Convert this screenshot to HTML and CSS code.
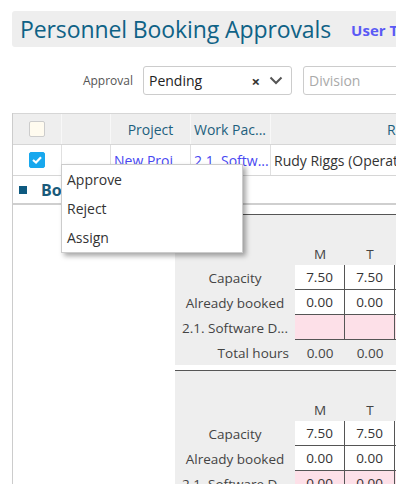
FILE: index.html
```html
<!DOCTYPE html>
<html>
<head>
<meta charset="utf-8">
<link rel="stylesheet" href="styles.css">
</head>
<body>
<div class="page">
  <div class="header">
    <h1 class="title">Personnel Booking Approvals</h1>
    <a class="user-link">User Timesheets</a>
  </div>

  <div class="filters">
    <span class="filter-label">Approval</span>
    <div class="select">
      <span class="select-value">Pending</span>
      <span class="select-clear">×</span>
      <svg class="chevron" width="14" height="9" viewBox="0 0 14 9"><path d="M1.5 1.5 L7 7 L12.5 1.5" fill="none" stroke="#555" stroke-width="2"/></svg>
    </div>
    <div class="select select-wide">
      <span class="select-placeholder">Division</span>
    </div>
  </div>

  <div class="grid">
    <div class="row head">
      <div class="cell c-check"><span class="checkbox"></span></div>
      <div class="cell c-blank"></div>
      <div class="cell c-project center">Project</div>
      <div class="cell c-wp">Work Pac...</div>
      <div class="cell c-req center">Requester</div>
    </div>
    <div class="row data">
      <div class="cell c-check"><span class="checkbox checked"><svg width="10" height="8" viewBox="0 0 10 8"><path d="M1 4 L4 6.5 L9 1.2" fill="none" stroke="#fff" stroke-width="2.2"/></svg></span></div>
      <div class="cell c-blank"></div>
      <div class="cell c-project"><a class="link">New Proj</a></div>
      <div class="cell c-wp"><a class="link">2.1. Softw...</a></div>
      <div class="cell c-req">Rudy Riggs (Operations)</div>
    </div>
    <div class="group">
      <span class="group-icon"></span>
      <span class="group-title">Booking details</span>
    </div>
    <div class="details">
      <div class="panel">
        <table class="hours">
          <tr class="days"><td class="lbl"></td><td class="day">M</td><td class="day">T</td><td class="day">W</td></tr>
          <tr><td class="lbl">Capacity</td><td class="v">7.50</td><td class="v">7.50</td><td class="v">7.50</td></tr>
          <tr><td class="lbl">Already booked</td><td class="v">0.00</td><td class="v">0.00</td><td class="v">0.00</td></tr>
          <tr><td class="lbl">2.1. Software D...</td><td class="v pink"></td><td class="v pink"></td><td class="v pink"></td></tr>
          <tr class="total"><td class="lbl right">Total hours</td><td class="t">0.00</td><td class="t">0.00</td><td class="t">0.00</td></tr>
        </table>
      </div>
      <div class="panel">
        <table class="hours">
          <tr class="days"><td class="lbl"></td><td class="day">M</td><td class="day">T</td><td class="day">W</td></tr>
          <tr><td class="lbl">Capacity</td><td class="v">7.50</td><td class="v">7.50</td><td class="v">7.50</td></tr>
          <tr><td class="lbl">Already booked</td><td class="v">0.00</td><td class="v">0.00</td><td class="v">0.00</td></tr>
          <tr><td class="lbl">2.1. Software D...</td><td class="v pink">0.00</td><td class="v pink">0.00</td><td class="v pink">0.00</td></tr>
          <tr class="total"><td class="lbl right">Total hours</td><td class="t">0.00</td><td class="t">0.00</td><td class="t">0.00</td></tr>
        </table>
      </div>
    </div>
  </div>

  <div class="menu">
    <div class="menu-item">Approve</div>
    <div class="menu-item">Reject</div>
    <div class="menu-item">Assign</div>
  </div>
</div>
</body>
</html>
```

FILE: styles.css
```css
html, body {
  margin: 0;
  padding: 0;
  overflow: hidden;
  background: #fff;
}
body {
  font-family: "Open Sans", "Noto Sans", sans-serif;
  color: #333;
  width: 396px;
  height: 484px;
}
.page {
  position: relative;
  padding: 11px 0 0 12px;
  width: 800px;
}
.header {
  display: flex;
  align-items: center;
  height: 36px;
  background: #eeeeee;
  border-radius: 3px 0 0 3px;
  padding-left: 8px;
  white-space: nowrap;
}
.title {
  margin: 0;
  font-weight: normal;
  font-size: 23px;
  color: #0f6286;
  letter-spacing: -0.1px;
}
.user-link {
  margin-left: 20px;
  font-size: 15px;
  font-weight: bold;
  color: #5a5af5;
  margin-top: 2px;
}
.filters {
  display: flex;
  align-items: center;
  margin-top: 19px;
  padding-left: 62px;
  height: 29px;
}
.filter-label {
  font-size: 12px;
  color: #555;
  width: 59px;
  text-align: right;
  margin-right: 10px;
}
.select {
  box-sizing: border-box;
  display: flex;
  align-items: center;
  width: 149px;
  height: 29px;
  border: 1px solid #ccc;
  border-radius: 3px;
  padding: 0 5px 0 5px;
}
.select-value {
  flex: 1;
  font-size: 14px;
  color: #222;
}
.select-clear {
  font-size: 15px;
  font-weight: bold;
  color: #333;
  margin-right: 9px;
}
.chevron {
  margin-right: 3px;
}
.select-wide {
  margin-left: 11px;
  width: 200px;
}
.select-placeholder {
  font-size: 14px;
  color: #aaa;
}
.grid {
  margin-top: 18px;
  border-left: 1px solid #ccc;
  width: 760px;
}
.row {
  display: flex;
  border-top: 1px solid #d6d6d6;
}
.row.head {
  background: #eeeeee;
  height: 30px;
}
.row.data {
  height: 30px;
}
.cell {
  box-sizing: border-box;
  display: flex;
  align-items: center;
  font-size: 14px;
  white-space: nowrap;
  overflow: hidden;
  padding: 0 3px;
}
.head .cell {
  color: #1d5f7d;
  border-right: 1px solid #f8f8f8;
}
.data .cell {
  border-right: 1px solid #e0e0e0;
}
.center {
  justify-content: center;
}
.c-check { width: 49px; justify-content: center; }
.c-blank { width: 49px; }
.c-project { width: 80px; }
.c-wp { width: 80px; }
.c-req { width: 300px; }
.checkbox {
  box-sizing: border-box;
  display: inline-flex;
  align-items: center;
  justify-content: center;
  width: 16px;
  height: 16px;
  border: 1px solid #ccc;
  border-radius: 2px;
  background: #fffbef;
}
.checkbox.checked {
  background: #18a8ee;
  border-color: #18a8ee;
}
.link {
  color: #4848f2;
}
.group {
  display: flex;
  align-items: center;
  height: 27px;
  border-top: 1px solid #d6d6d6;
  border-bottom: 2px solid #cfcfcf;
  padding-left: 6px;
}
.group-icon {
  width: 8px;
  height: 8px;
  background: #0e5a80;
  margin-right: 14px;
}
.group-title {
  font-size: 16px;
  font-weight: bold;
  color: #1a5a7a;
}
.details {
  padding-top: 9px;
  padding-left: 162px;
}
.panel {
  background: #eeeeee;
  border-top: 1px solid #555;
  padding-top: 23px;
  margin-bottom: 5px;
}
.hours {
  border-collapse: separate;
  border-spacing: 0;
  font-size: 13.5px;
}
.hours td {
  box-sizing: border-box;
  padding: 0;
  height: 25px;
  white-space: nowrap;
}
.hours .days td {
  height: 27px;
  text-align: center;
  vertical-align: bottom;
  line-height: 20px;
  padding-bottom: 1px;
  color: #444;
}
.hours .lbl {
  width: 120px;
  text-align: center;
  color: #444;
}
.hours .lbl.right {
  text-align: right;
  padding-right: 6px;
}
.hours .v {
  width: 50px;
  text-align: center;
  background: #fff;
  border-right: 1px solid #555;
  border-bottom: 1px solid #555;
  color: #333;
}
.v.pink {
  background: #fde0e8;
}
.t {
  width: 50px;
  text-align: center;
  color: #444;
}
.menu {
  position: absolute;
  left: 61px;
  top: 164px;
  width: 180px;
  background: #fff;
  border: 1px solid #ccc;
  box-shadow: 3px 3px 5px rgba(0, 0, 0, 0.35);
}
.menu-item {
  height: 29px;
  line-height: 29px;
  padding-left: 5px;
  font-size: 14px;
  color: #333;
}
```
